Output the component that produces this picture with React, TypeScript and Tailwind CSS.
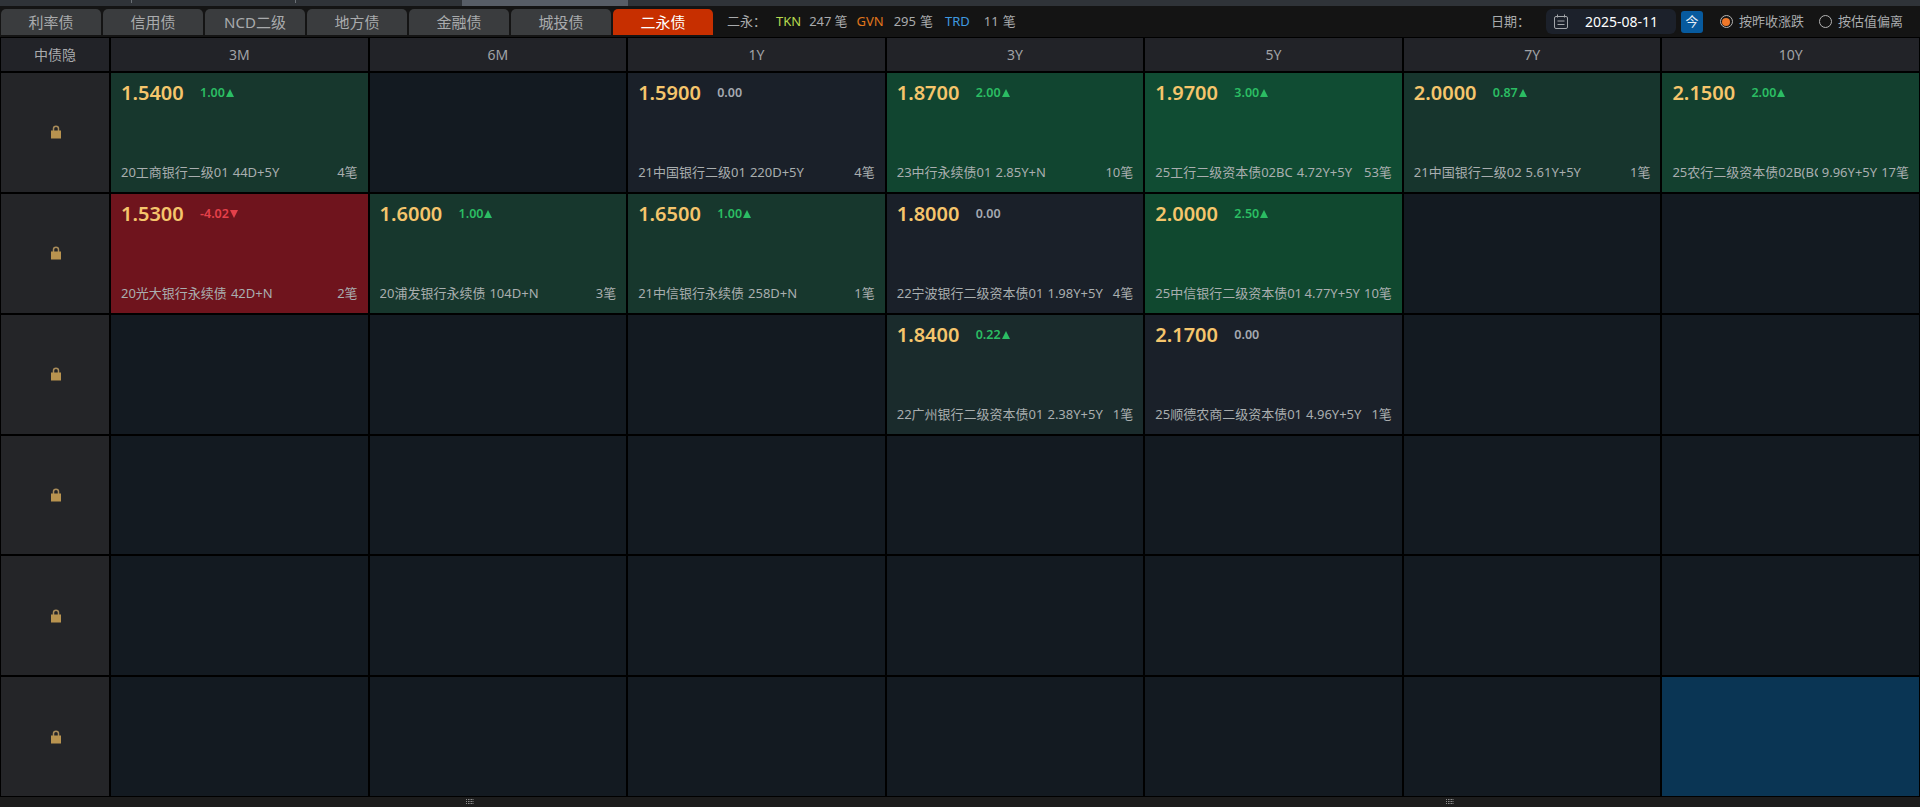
const tabs = ["利率债", "信用债", "NCD二级", "地方债", "金融债", "城投债", "二永债"];
const tenors = ["3M", "6M", "1Y", "3Y", "5Y", "7Y", "10Y"];

type Quote = {
  bg: string;
  price: string;
  change: string;
  dir: "up" | "down" | "flat";
  name: string;
  term: string;
  count: string;
};

const rows: (Quote | null)[][] = [
  [
    { bg: "bg-[#17372d]", price: "1.5400", change: "1.00", dir: "up", name: "20工商银行二级01", term: "44D+5Y", count: "4笔" },
    null,
    { bg: "bg-[#1a2029]", price: "1.5900", change: "0.00", dir: "flat", name: "21中国银行二级01", term: "220D+5Y", count: "4笔" },
    { bg: "bg-[#114530]", price: "1.8700", change: "2.00", dir: "up", name: "23中行永续债01", term: "2.85Y+N", count: "10笔" },
    { bg: "bg-[#104c33]", price: "1.9700", change: "3.00", dir: "up", name: "25工行二级资本债02BC", term: "4.72Y+5Y", count: "53笔" },
    { bg: "bg-[#17352d]", price: "2.0000", change: "0.87", dir: "up", name: "21中国银行二级02", term: "5.61Y+5Y", count: "1笔" },
    { bg: "bg-[#13402f]", price: "2.1500", change: "2.00", dir: "up", name: "25农行二级资本债02B(BC)", term: "9.96Y+5Y", count: "17笔" },
  ],
  [
    { bg: "bg-[#6f141d]", price: "1.5300", change: "-4.02", dir: "down", name: "20光大银行永续债", term: "42D+N", count: "2笔" },
    { bg: "bg-[#17372d]", price: "1.6000", change: "1.00", dir: "up", name: "20浦发银行永续债", term: "104D+N", count: "3笔" },
    { bg: "bg-[#17372d]", price: "1.6500", change: "1.00", dir: "up", name: "21中信银行永续债", term: "258D+N", count: "1笔" },
    { bg: "bg-[#1a2029]", price: "1.8000", change: "0.00", dir: "flat", name: "22宁波银行二级资本债01", term: "1.98Y+5Y", count: "4笔" },
    { bg: "bg-[#10482f]", price: "2.0000", change: "2.50", dir: "up", name: "25中信银行二级资本债01", term: "4.77Y+5Y", count: "10笔" },
    null,
    null,
  ],
  [
    null,
    null,
    null,
    { bg: "bg-[#1a2b2c]", price: "1.8400", change: "0.22", dir: "up", name: "22广州银行二级资本债01", term: "2.38Y+5Y", count: "1笔" },
    { bg: "bg-[#1a2029]", price: "2.1700", change: "0.00", dir: "flat", name: "25顺德农商二级资本债01", term: "4.96Y+5Y", count: "1笔" },
    null,
    null,
  ],
  [null, null, null, null, null, null, null],
  [null, null, null, null, null, null, null],
  [null, null, null, null, null, null, "blue" as unknown as null],
];

function LockIcon() {
  return (
    <svg width="12" height="14" viewBox="0 0 12 14" className="ml-[2px]">
      <path d="M3.5 6V3.6C3.5 2.2 4.5 1.2 6 1.2s2.5 1 2.5 2.4V6" fill="none" stroke="#a98c5a" strokeWidth="1.5" />
      <rect x="1" y="5.5" width="10" height="8" fill="#b8934f" />
    </svg>
  );
}

function HandleIcon() {
  return (
    <svg width="8" height="6" viewBox="0 0 8 6">
      <path d="M0 .5h1M2 .5h6M0 2.5h1M2 2.5h6M0 4.5h1M2 4.5h6" stroke="#8a8a8a" strokeWidth="1" strokeDasharray="1 .5" />
    </svg>
  );
}

function QuoteCell({ q }: { q: Quote }) {
  const changeColor =
    q.dir === "up" ? "text-[#2bbd63]" : q.dir === "down" ? "text-[#e5404a]" : "text-[#a4a9b1]";
  return (
    <div className={`${q.bg} flex min-w-0 flex-col justify-between px-[10px] pt-[7px] pb-[10px]`}>
      <div className="flex items-center">
        <span className="w-[63px] text-[20px] leading-[26px] font-semibold text-[#f5c56c]">{q.price}</span>
        <span className={`ml-[16px] flex items-center text-[12.5px] leading-[26px] font-semibold ${changeColor}`}>
          {q.change}
          {q.dir === "up" && <span className="ml-[1px] h-0 w-0 border-x-[4.5px] border-b-[8px] border-x-transparent border-b-[#2bbd63]" />}
          {q.dir === "down" && <span className="ml-[1px] h-0 w-0 border-x-[4.5px] border-t-[8px] border-x-transparent border-t-[#e5404a]" />}
        </span>
      </div>
      <div className="flex items-center justify-between gap-[4px] text-[13px] leading-[20px] whitespace-nowrap text-[#a9aeaf]">
        <div className="flex min-w-0 gap-[4px]">
          <span className="min-w-0 overflow-hidden">{q.name}</span>
          <span className="shrink-0">{q.term}</span>
        </div>
        <span className="shrink-0">{q.count}</span>
      </div>
    </div>
  );
}

export default function App() {
  return (
    <div className="flex h-[807px] w-[1920px] flex-col overflow-hidden bg-black font-['Noto_Sans','Noto_Sans_CJK_SC',sans-serif] text-[13px]">
      {/* window scroll strip */}
      <div className="flex h-[6px] shrink-0 bg-[#2f3338]">
        <div className="ml-[131px] h-[3px] w-px bg-[#6b7076]" />
        <div className="ml-[163px] h-[3px] w-px bg-[#6b7076]" />
        <div className="ml-[166px] h-[6px] w-[166px] bg-[#575d66]" />
      </div>

      {/* tab bar */}
      <div className="flex h-[31px] shrink-0 items-stretch justify-between bg-[#141414] pt-[3px] pl-px">
        <div className="flex items-stretch">
          <div className="flex h-[26px] gap-[2px]">
            {tabs.map((t, i) => (
              <div
                key={t}
                className={`flex w-[100px] items-center justify-center rounded-t-[5px] text-[15px] ${
                  i === 6 ? "bg-[#c72f00] text-white" : "bg-[#3a3c3e] text-[#a9abad]"
                }`}
              >
                {t}
              </div>
            ))}
          </div>
          <div className="ml-[14px] flex h-[26px] items-center text-[13px] text-[#a9abad]">
            <span className="w-[49px]">二永：</span>
            <span className="text-[#b7d84f]">TKN</span>
            <span className="ml-[8px]">247</span>
            <span className="ml-[3px]">笔</span>
            <span className="ml-[9px] text-[#e0761c]">GVN</span>
            <span className="ml-[10px]">295</span>
            <span className="ml-[4px]">笔</span>
            <span className="ml-[12px] text-[#3f9ae0]">TRD</span>
            <span className="ml-[14px]">11</span>
            <span className="ml-[4px]">笔</span>
          </div>
        </div>
        <div className="flex h-[25px] items-center pr-[17px] text-[#a9abad]">
          <span className="mr-[16px]">日期：</span>
          <div className="flex h-[25px] w-[130px] items-center rounded-[6px] bg-[#1c212b] pl-[8px] text-white">
            <svg width="14" height="15" viewBox="0 0 14 15" fill="none" stroke="#a3a6aa" strokeWidth="1">
              <rect x=".5" y="2.5" width="13" height="12" rx="1.5" />
              <path d="M3.5 .5v3M10.5 .5v3M3.5 7h7M3.5 10.5h7" />
            </svg>
            <span className="ml-[17px] text-[14px]">2025-08-11</span>
          </div>
          <div className="ml-[5px] flex h-[22px] w-[22px] items-center justify-center rounded-[3px] bg-[#075a9e] text-[13px] text-[#e4eef6]">
            今
          </div>
          <span className="ml-[17px] flex h-[13px] w-[13px] items-center justify-center rounded-full border border-[#b5b5b5]">
            <span className="h-[8px] w-[8px] rounded-full bg-[#f0782a]" />
          </span>
          <span className="ml-[6px]">按昨收涨跌</span>
          <span className="ml-[15px] h-[13px] w-[13px] rounded-full border border-[#b5b5b5]" />
          <span className="ml-[6px]">按估值偏离</span>
        </div>
      </div>

      {/* tenor matrix */}
      <div className="grid min-h-0 flex-1 grid-cols-[108px_repeat(7,minmax(0,1fr))] grid-rows-[33px_repeat(6,minmax(0,1fr))] gap-[2px] border-t border-[#000] px-px">
        <div className="flex items-center justify-center bg-[#222328] text-[14px] text-[#a9abad]">中债隐</div>
        {tenors.map((t) => (
          <div key={t} className="flex items-center justify-center bg-[#222328] text-[14px] text-[#a0a2a6]">
            {t}
          </div>
        ))}
        {rows.flatMap((row, r) => [
          <div key={`lock-${r}`} className="flex items-center justify-center bg-[#242528]">
            <LockIcon />
          </div>,
          ...row.map((q, c) =>
            q && typeof q === "object" ? (
              <QuoteCell key={`${r}-${c}`} q={q} />
            ) : (
              <div key={`${r}-${c}`} className={q ? "bg-[#0a3554]" : "bg-[#131a21]"} />
            ),
          ),
        ])}
      </div>

      {/* bottom splitter bar */}
      <div className="mt-px flex h-[10px] shrink-0 items-center gap-[972px] bg-[#1c1c1c] pl-[466px]">
        <HandleIcon />
        <HandleIcon />
      </div>
    </div>
  );
}
